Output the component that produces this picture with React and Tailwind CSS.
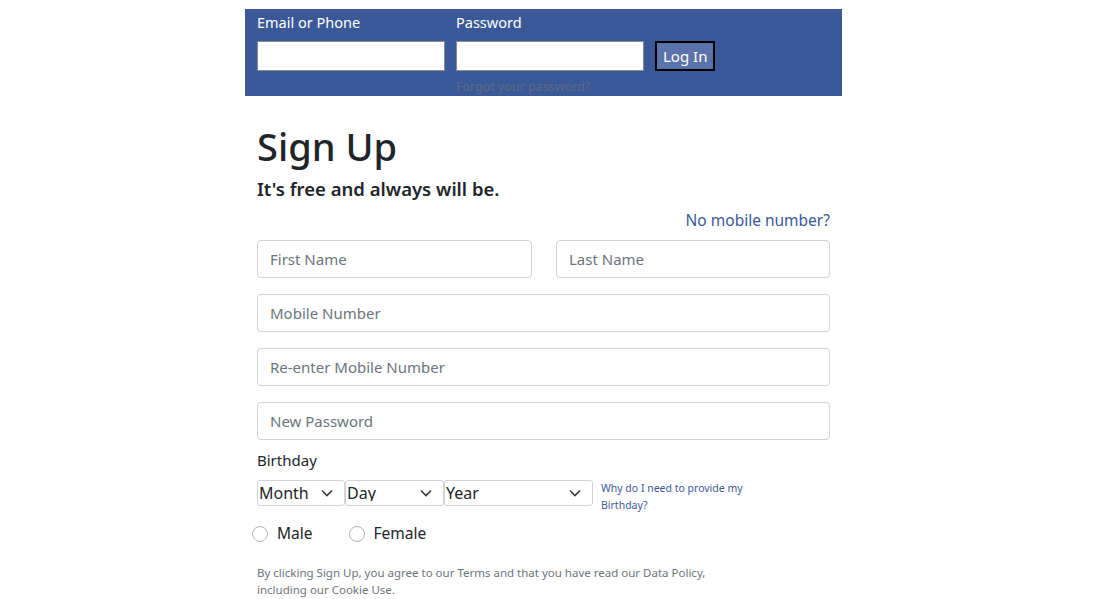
import { useState } from "react";

const font = { fontFamily: '"Noto Sans", "Open Sans", sans-serif' };

function Chevron() {
  return (
    <svg
      className="pointer-events-none absolute right-[12px] top-1/2 -translate-y-1/2"
      width="12"
      height="8"
      viewBox="0 0 12 8"
      fill="none"
      stroke="#343a40"
      strokeWidth="1.6"
    >
      <path d="M1 1.5l5 5 5-5" />
    </svg>
  );
}

function BirthdaySelect({ label, width }) {
  return (
    <div className={`relative ${width}`}>
      <select className="h-[26px] w-full appearance-none rounded-[3px] border border-[#ced4da] bg-white pl-[1px] text-[16px] leading-none text-[#212529] outline-none">
        <option>{label}</option>
      </select>
      <Chevron />
    </div>
  );
}

function TextInput({ placeholder, className = "" }) {
  return (
    <input
      placeholder={placeholder}
      className={`h-[38px] rounded-[4px] border border-[#ced4da] bg-white px-[12px] text-[15px] text-[#495057] placeholder:text-[#6c757d] outline-none ${className}`}
    />
  );
}

function Radio({ checked, onChange }) {
  return (
    <input
      type="radio"
      name="gender"
      checked={checked}
      onChange={onChange}
      className="m-0 h-[16px] w-[16px] appearance-none rounded-full border border-[#adb5bd] bg-white checked:border-[5px] checked:border-[#3b5998]"
    />
  );
}

export default function App() {
  const [gender, setGender] = useState("");

  return (
    <div className="min-h-screen bg-white pt-[9px]" style={font}>
      <div className="ml-[245px] w-[597px]">
        <div className="h-[87px] bg-[#3b5998] px-[12px] pt-[2px]">
          <div className="flex gap-[11px]">
            <div className="flex w-[188px] flex-col">
              <label className="text-[14.5px] leading-[22px] text-white">Email or Phone</label>
              <input className="mt-[8px] h-[30px] w-[188px] border border-[#8a8a8a] bg-white outline-none" />
            </div>
            <div className="flex w-[188px] flex-col">
              <label className="text-[14.5px] leading-[22px] text-white">Password</label>
              <input
                type="password"
                className="mt-[8px] h-[30px] w-[188px] border border-[#8a8a8a] bg-white outline-none"
              />
              <a className="mt-[7px] whitespace-nowrap text-[12.5px] leading-[17px] text-[#5d6a88]">
                Forgot your password?
              </a>
            </div>
            <div className="pt-[30px]">
              <button className="h-[30px] border-2 border-black bg-[#5b72aa] px-[6px] text-[15px] leading-none text-white">
                Log In
              </button>
            </div>
          </div>
        </div>

        <div className="px-[12px] pt-[27px]">
          <h1 className="text-[38px] font-medium leading-[46px] text-[#212529]">Sign Up</h1>
          <p className="mt-[7px] text-[18.5px] font-semibold leading-[26px] text-[#212529]">
            It's free and always will be.
          </p>
          <div className="mt-[8px] text-right text-[15.5px] leading-[20px] text-[#3b5998]">
            No mobile number?
          </div>
          <form className="mt-[10px] flex flex-col gap-[16px]">
            <div className="flex gap-[24px]">
              <TextInput placeholder="First Name" className="w-[275px]" />
              <TextInput placeholder="Last Name" className="flex-1" />
            </div>
            <TextInput placeholder="Mobile Number" className="w-full" />
            <TextInput placeholder="Re-enter Mobile Number" className="w-full" />
            <TextInput placeholder="New Password" className="w-full" />
          </form>
          <div className="mt-[10px] text-[15px] leading-[20px] text-[#212529]">Birthday</div>
          <div className="mt-[10px] flex items-start">
            <BirthdaySelect label="Month" width="w-[88px]" />
            <BirthdaySelect label="Day" width="w-[99px]" />
            <BirthdaySelect label="Year" width="w-[149px]" />
            <p className="ml-[8px] w-[150px] text-[10.5px] leading-[17px] text-[#3b5998]">
              Why do I need to provide my Birthday?
            </p>
          </div>
          <div className="-ml-[5px] mt-[8px] flex items-center text-[15.5px] text-[#212529]">
            <label className="flex items-center gap-[9px]">
              <Radio checked={gender === "male"} onChange={() => setGender("male")} />
              Male
            </label>
            <label className="ml-[36px] flex items-center gap-[9px]">
              <Radio checked={gender === "female"} onChange={() => setGender("female")} />
              Female
            </label>
          </div>
          <p className="mt-[19px] w-[460px] text-[11.5px] leading-[17px] text-[#6c757d]">
            By clicking Sign Up, you agree to our Terms and that you have read our Data Policy,
            including our Cookie Use.
          </p>
        </div>
      </div>
    </div>
  );
}
